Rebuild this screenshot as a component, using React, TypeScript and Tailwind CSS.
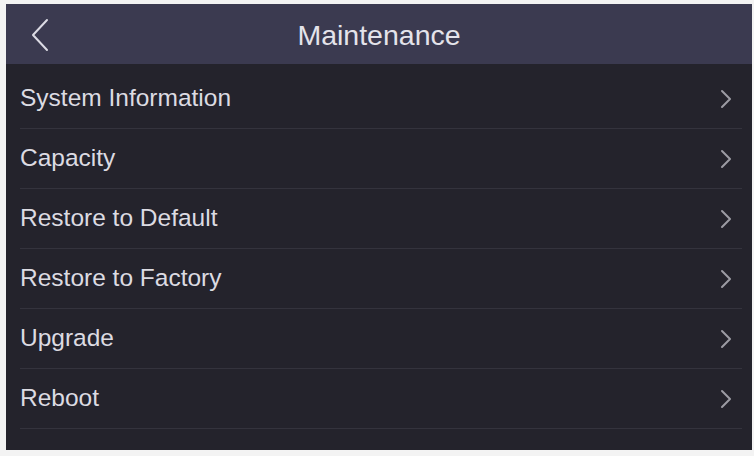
const items = [
  "System Information",
  "Capacity",
  "Restore to Default",
  "Restore to Factory",
  "Upgrade",
  "Reboot",
];

function ChevronLeft() {
  return (
    <svg width="20" height="34" viewBox="0 0 20 34" fill="none">
      <path d="M17 2 L3 17 L17 32" stroke="#dcdbe4" strokeWidth="2" strokeLinecap="round" strokeLinejoin="round" />
    </svg>
  );
}

function ChevronRight() {
  return (
    <svg width="12" height="20" viewBox="0 0 12 20" fill="none">
      <path d="M2 2 L10 10 L2 18" stroke="#9c9ba4" strokeWidth="2" strokeLinecap="round" strokeLinejoin="round" />
    </svg>
  );
}

export default function App() {
  return (
    <div className="h-[456px] w-[754px] bg-[#f3f3f3] pl-[6px] pt-[4px] font-['Liberation_Sans',Arial,sans-serif]">
      <div className="flex h-[446px] w-[746px] flex-col bg-[#24232c]">
        {/* Header */}
        <div className="relative flex h-[60px] items-center justify-center bg-[#3b3a50]">
          <div className="absolute left-[24px] top-[14px]">
            <ChevronLeft />
          </div>
          <span className="pt-[2px] text-[28.5px] text-[#e4e3ea]">Maintenance</span>
        </div>

        {/* Menu */}
        <div className="flex flex-col pt-[5px]">
          {items.map((item) => (
            <div key={item} className="ml-[14px] mr-[10px] flex h-[60px] items-center justify-between border-b border-[#34333d] pr-[10px]">
              <span className="text-[24.5px] text-[#dcdbe2]">{item}</span>
              <ChevronRight />
            </div>
          ))}
        </div>
      </div>
    </div>
  );
}
